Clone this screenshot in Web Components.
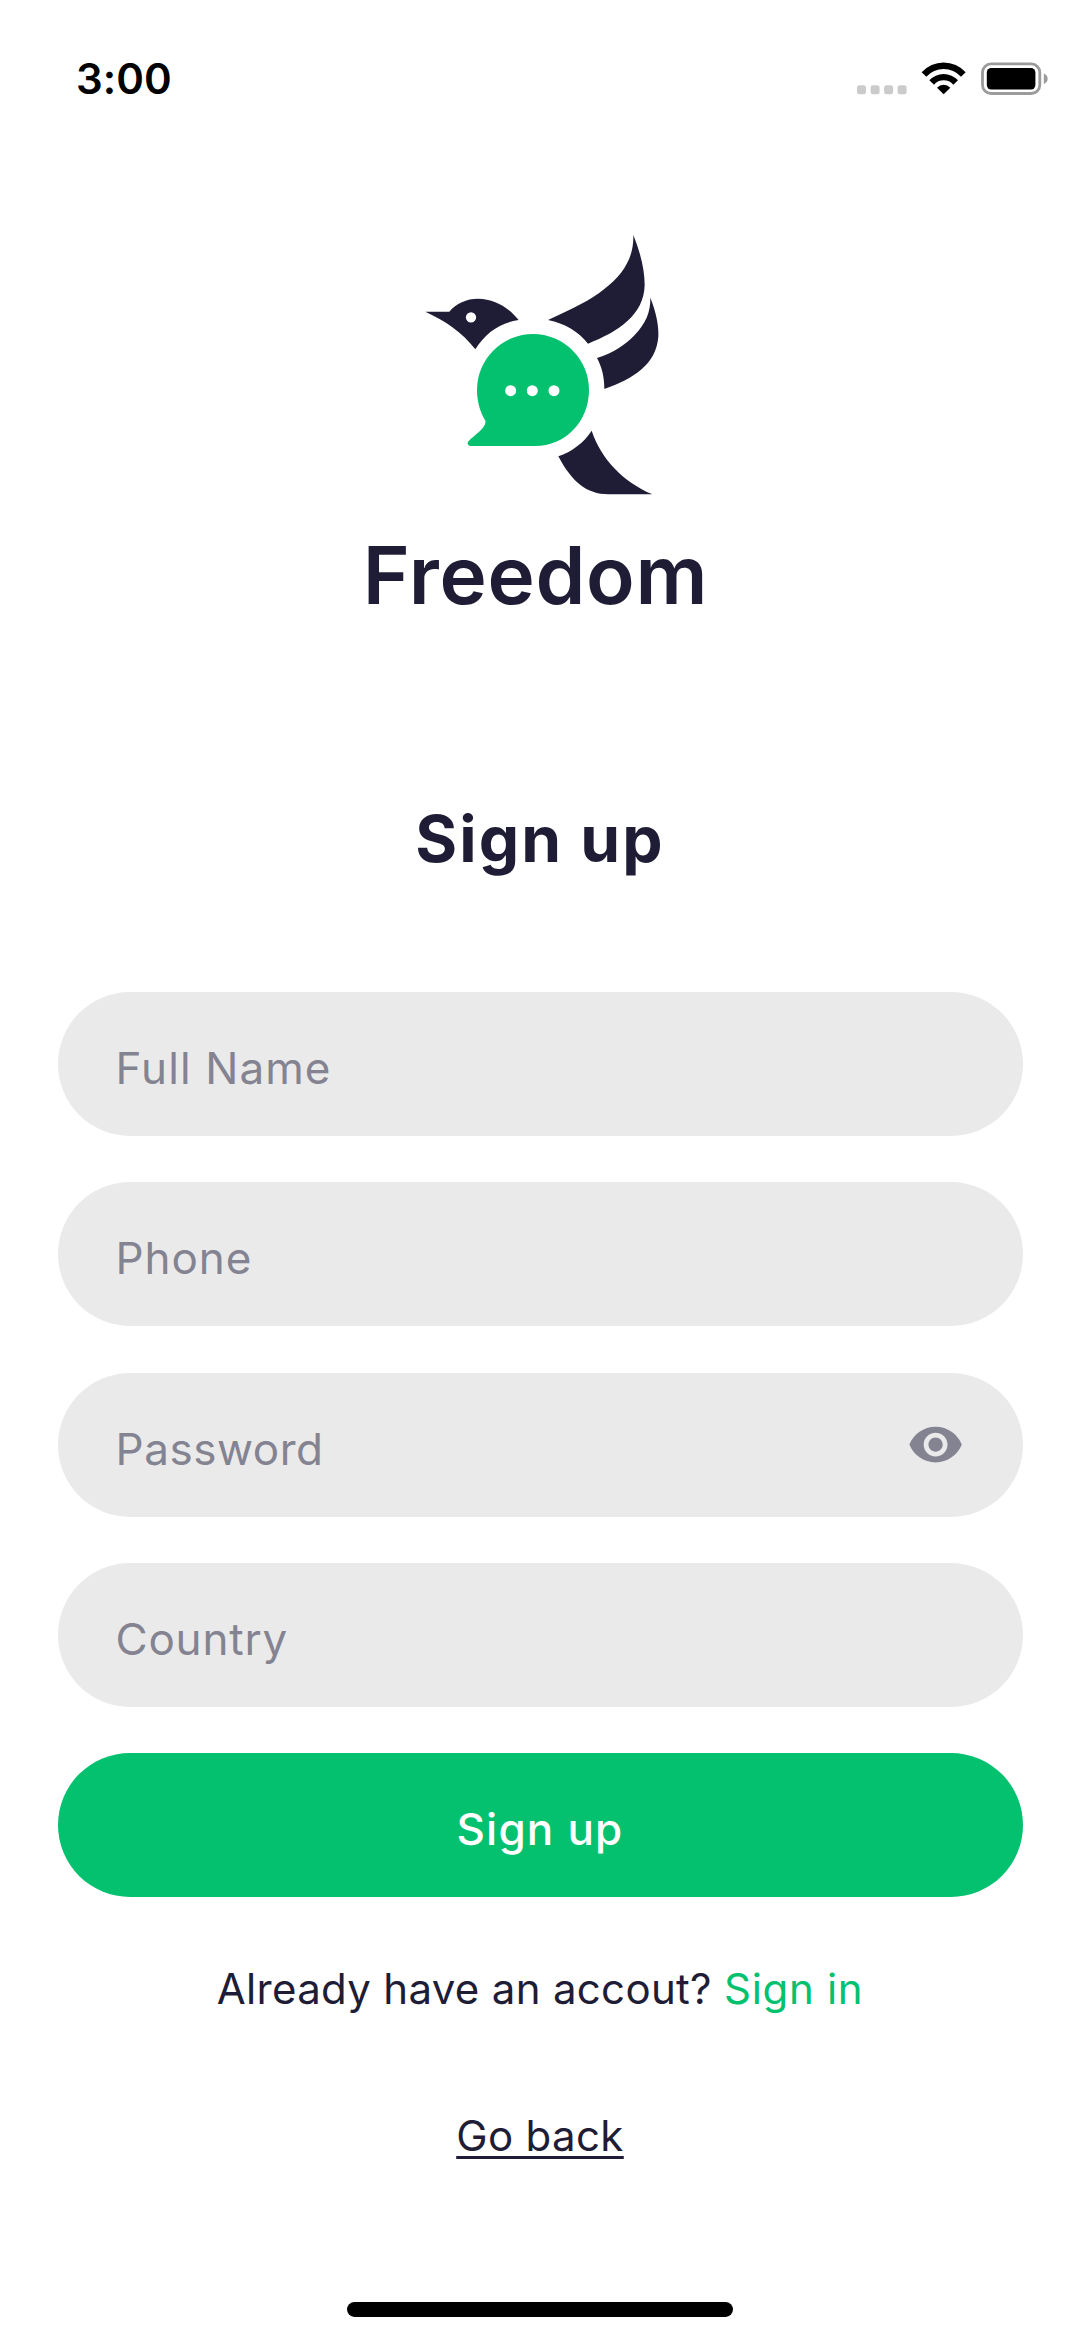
<!DOCTYPE html>
<html lang="en">
<head>
<meta charset="utf-8">
<title>Sign up</title>
<style>
  html, body { margin: 0; background: #fff; }
  body { font-family: Inter, "Liberation Sans", sans-serif; color: #1e1d35; }
</style>
</head>
<body>
<signup-screen></signup-screen>

<template id="t-status-bar">
  <style>
    :host { display: flex; justify-content: space-between; box-sizing: border-box; height: 220px; padding: 49px 32px 0 76px; color: #000; }
    time { font-size: 42px; font-weight: 600; line-height: 60px; letter-spacing: .06px; }
    svg { display: block; width: 191px; height: 33px; margin-top: 13px; }
  </style>
  <time>3:00</time>
  <svg viewBox="857 62 191 33" aria-hidden="true">
    <g fill="#cbcbcb">
      <rect x="857" y="85.3" width="9" height="9" rx="2.5"/>
      <rect x="870.6" y="85.3" width="9" height="9" rx="2.5"/>
      <rect x="884.1" y="85.3" width="9" height="9" rx="2.5"/>
      <rect x="897.6" y="85.3" width="9" height="9" rx="2.5"/>
    </g>
    <g transform="translate(840 40) scale(.33333)">
      <path d="M245 97A88 88 0 0 1 377 97L363 110A70 70 0 0 0 259 110ZM268 121A58 58 0 0 1 354 121L340 134A38 38 0 0 0 282 134ZM291 143A28 28 0 0 1 331 143L311 163Z"/>
    </g>
    <rect x="982.5" y="63.9" width="57.3" height="29.6" rx="8.5" fill="none" stroke="#9b9b9b" stroke-width="2.8"/>
    <rect x="986.8" y="67.9" width="48.6" height="21.6" rx="4.5"/>
    <path d="M1043.8 73.5Q1047.6 75 1047.6 78.8T1043.8 84Z" fill="#9b9b9b"/>
  </svg>
</template>

<template id="t-brand-logo">
  <style>
    :host { display: flex; flex-direction: column; align-items: center; }
    svg { display: block; width: 280px; height: 290px; }
    .name { margin: 15px 9px 0 0; font-size: 80px; font-weight: 600; line-height: 100px; letter-spacing: .7px; }
  </style>
  <svg viewBox="0 0 840 870" fill="#1e1d35" aria-hidden="true">
    <path fill-rule="evenodd" d="M76 275H148C168 250 200 236 234 236C284 237 326 262 356 300C302 308 258 336 226 388C186 336 138 304 76 275ZM213 276.500A15.500 15.500 0 1 0 213 307.500A15.500 15.500 0 1 0 213 276.500Z"/>
    <path d="M700 45C722 100 734 150 734 195C732 285 655 335 564 371C535 335 495 310 444 300C520 266 572 240 612 208C672 162 702 110 700 45Z"/>
    <path d="M751 233C768 275 777 318 775 350C768 435 700 475 613 507C613 472 606 442 591 414C640 398 674 375 702 347C738 310 752 275 751 233Z"/>
    <path d="M575 632C605 720 670 785 757 823H625C560 823 515 785 475 709C515 695 552 668 575 632Z"/>
    <path fill="#03c16e" d="M256 602C240 575 231 544 231 510A168 168 0 0 1 567 510C567 605 496 678 405 678H212C203 678 200 669 206 663C224 644 261 622 256 602Z"/>
    <g fill="#fff"><circle cx="332" cy="512" r="16.500"/><circle cx="397" cy="512" r="16.500"/><circle cx="462" cy="512" r="16.500"/></g>
  </svg>
  <div class="name"><slot></slot></div>
</template>

<template id="t-form-field">
  <style>
    :host { display: flex; align-items: center; justify-content: space-between; box-sizing: border-box; height: 144px; padding: 0 58px; border-radius: 72px; background: #eaeaea; color: #848391; }
    .label { padding-top: 8px; font-size: 44px; line-height: 60px; letter-spacing: var(--tracking, .9px); }
  </style>
  <span class="label"><slot></slot></span>
  <slot name="icon"></slot>
</template>

<template id="t-eye-icon">
  <style>
    :host { display: block; width: 57.200px; height: 57.200px; }
    svg { display: block; width: 100%; height: 100%; }
  </style>
  <svg viewBox="0 0 24 24" fill="#848391" aria-hidden="true"><path d="M12 4.500C7 4.500 2.730 7.610 1 12c1.730 4.390 6 7.500 11 7.500s9.270-3.110 11-7.500c-1.730-4.390-6-7.500-11-7.500zM12 17c-2.760 0-5-2.240-5-5s2.240-5 5-5 5 2.240 5 5-2.240 5-5 5zm0-8c-1.660 0-3 1.340-3 3s1.340 3 3 3 3-1.340 3-3-1.340-3-3-3z"/></svg>
</template>

<template id="t-primary-button">
  <style>
    :host { display: block; }
    button { display: block; width: 100%; height: 144px; padding: 8px 0 0; border: 0; border-radius: 72px; background: #03c16e; color: #fff; font: 500 44px/60px Inter, "Liberation Sans", sans-serif; letter-spacing: 1.190px; }
  </style>
  <button type="button"><slot></slot></button>
</template>

<template id="t-home-indicator">
  <style>:host { display: block; width: 386px; height: 14.700px; border-radius: 7.400px; background: #000; }</style>
</template>

<template id="t-signup-screen">
  <style>
    :host { display: flex; flex-direction: column; align-items: center; box-sizing: border-box; width: 1080px; height: 2340px; padding-bottom: 23px; background: #fff; }
    status-bar { align-self: stretch; }
    h1 { margin: 173.700px 0 0; font-size: 64px; font-weight: 700; line-height: 80px; letter-spacing: 2.080px; }
    form { display: flex; flex-direction: column; gap: 46.300px; width: 965px; margin: 113.300px 0 0; }
    p { margin: 61.400px 0 0; font-size: 42px; line-height: 60px; letter-spacing: .310px; }
    .signin { color: #03c16e; letter-spacing: .670px; }
    .back { margin-top: 87px; font-size: 42px; line-height: 60px; letter-spacing: .350px; text-decoration: underline; text-decoration-thickness: 3px; text-underline-offset: 5px; text-decoration-skip-ink: none; }
    home-indicator { margin-top: auto; }
  </style>
  <status-bar></status-bar>
  <brand-logo>Freedom</brand-logo>
  <h1>Sign up</h1>
  <form>
    <form-field style="--tracking:1.090px">Full Name</form-field>
    <form-field style="--tracking:.950px">Phone</form-field>
    <form-field style="--tracking:.550px">Password<eye-icon slot="icon"></eye-icon></form-field>
    <form-field style="--tracking:.800px">Country</form-field>
    <primary-button>Sign up</primary-button>
  </form>
  <p>Already have an accout? <span class="signin">Sign in</span></p>
  <a class="back">Go back</a>
  <home-indicator></home-indicator>
</template>

<script>
  class TemplateElement extends HTMLElement {
    constructor() {
      super();
      const template = document.getElementById('t-' + this.localName);
      this.attachShadow({ mode: 'open' }).append(template.content.cloneNode(true));
    }
  }
  customElements.define('status-bar', class StatusBar extends TemplateElement {});
  customElements.define('brand-logo', class BrandLogo extends TemplateElement {});
  customElements.define('eye-icon', class EyeIcon extends TemplateElement {});
  customElements.define('form-field', class FormField extends TemplateElement {});
  customElements.define('primary-button', class PrimaryButton extends TemplateElement {});
  customElements.define('home-indicator', class HomeIndicator extends TemplateElement {});
  customElements.define('signup-screen', class SignupScreen extends TemplateElement {});
</script>
</body>
</html>
